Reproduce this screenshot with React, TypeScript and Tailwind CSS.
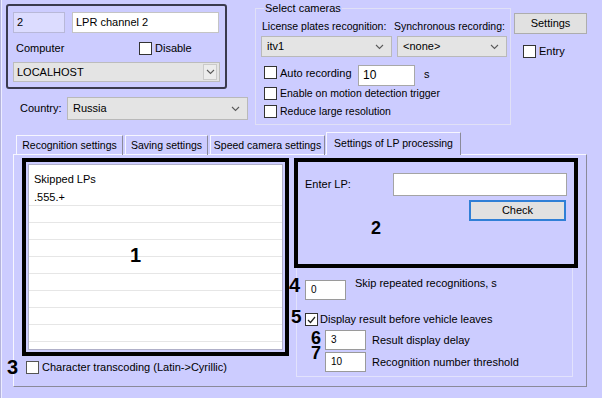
import React from "react"

const Chevron = () => (
  <svg width="9" height="6" viewBox="0 0 9 6" className="shrink-0">
    <path d="M1 1l3.5 3.5L8 1" fill="none" stroke="#5a5a5a" strokeWidth="1.1" />
  </svg>
)

const CheckBox = ({
  checked = false,
  className = "",
}: {
  checked?: boolean
  className?: string
}) => (
  <span
    className={`flex h-[13px] w-[13px] shrink-0 items-center justify-center border border-[#333333] bg-white ${className}`}
  >
    {checked && (
      <svg width="9" height="8" viewBox="0 0 9 8">
        <path d="M1 4l2.5 2.5L8 1" fill="none" stroke="#222" strokeWidth="1.2" />
      </svg>
    )}
  </span>
)

const Combo = ({ value, className = "" }: { value: string; className?: string }) => (
  <div
    className={`flex items-center justify-between border border-[#b9b9b9] bg-[#e4e4e4] pl-[5px] pr-[7px] ${className}`}
  >
    <span>{value}</span>
    <Chevron />
  </div>
)

// annotation digit over the dialog
const Num = ({ n, className }: { n: string; className: string }) => (
  <span className={`absolute font-bold leading-[14px] ${className}`}>{n}</span>
)

const Tab = ({ label, className = "" }: { label: string; className?: string }) => (
  <div
    className={`flex h-[20px] items-center justify-center whitespace-nowrap border-l border-t border-r border-l-[#f6f6ff] border-t-[#f6f6ff] border-r-[#8a8a9a] text-[10.5px] ${className}`}
  >
    {label}
  </div>
)

export default function App() {
  return (
    <div className="relative h-[398px] w-[602px] overflow-hidden bg-[#ccccff] text-[11px] leading-[13px] text-black shadow-[inset_1px_0_0_#b4b4dc,inset_2px_0_0_#ececff] [font-family:'Liberation_Sans',Arial,sans-serif]">
      {/* top area */}
      <div className="flex pl-[6px] pt-[2px]">
        <div className="w-[242px] pt-[2px]">
          <div className="h-[85px] w-[221px] rounded-[3px] border-2 border-[#3a3a4e] pl-[5px] pt-[6px]">
            <div className="flex gap-[7px]">
              <div className="h-[21px] w-[52px] border border-[#b8b8d8] bg-[#dcdcff] pl-[3px] leading-[19px]">
                2
              </div>
              <div className="h-[21px] w-[147px] border border-[#c4c4c4] bg-white pl-[3px] leading-[19px]">
                LPR channel 2
              </div>
            </div>
            <div className="mt-[9px] flex h-[13px] items-center">
              <span className="ml-[3px] w-[123px]">Computer</span>
              <CheckBox />
              <span className="ml-[3px]">Disable</span>
            </div>
            <div className="mt-[7px] flex h-[20px] w-[207px] items-center justify-between border border-[#bcbcbc] bg-[#e4e4e4] pl-[3px] pr-[2px]">
              <span>LOCALHOST</span>
              <span className="flex h-[16px] w-[14px] items-center justify-center border border-[#cacaca] bg-[#ececec]">
                <Chevron />
              </span>
            </div>
          </div>
          <div className="mt-[8px] flex items-center">
            <span className="ml-[14px] w-[47px]">Country:</span>
            <Combo value="Russia" className="h-[23px] w-[181px]" />
          </div>
        </div>

        <fieldset className="ml-[7px] h-[123px] w-[256px] border border-[#e0e0f6] pl-[5px] pt-[5px]">
          <legend className="ml-[3px] px-[1px] leading-[13px]">Select cameras</legend>
          <div className="flex h-[13px] whitespace-nowrap text-[10.5px]">
            <span className="ml-[1px] w-[132px]">License plates recognition:</span>
            <span>Synchronous recording:</span>
          </div>
          <div className="mt-[3px] flex gap-[5px]">
            <Combo value="itv1" className="h-[21px] w-[131px]" />
            <Combo value="<none>" className="h-[21px] w-[110px]" />
          </div>
          <div className="mt-[8px] flex h-[21px] items-start">
            <CheckBox className="ml-[3px] mt-[1px]" />
            <span className="ml-[3px] mt-[2px] w-[78px]">Auto recording</span>
            <div className="h-[21px] w-[57px] border border-[#a8a8a8] bg-white pl-[4px] text-[12px] leading-[19px]">
              10
            </div>
            <span className="ml-[9px] mt-[3px]">s</span>
          </div>
          <div className="mt-[1px] flex h-[13px] items-center">
            <CheckBox className="ml-[3px]" />
            <span className="ml-[3px] text-[10.5px]">Enable on motion detection trigger</span>
          </div>
          <div className="mt-[5px] flex h-[13px] items-center">
            <CheckBox className="ml-[3px]" />
            <span className="ml-[3px] text-[10.5px]">Reduce large resolution</span>
          </div>
        </fieldset>

        <div className="ml-[3px]">
          <div className="mt-[11px] flex h-[21px] w-[73px] items-center justify-center border border-[#adadad] bg-[#e1e1e1]">
            Settings
          </div>
          <div className="ml-[9px] mt-[11px] flex h-[13px] items-center">
            <CheckBox />
            <span className="ml-[3px]">Entry</span>
          </div>
        </div>
      </div>

      {/* tabs */}
      <div className="mt-[7px] flex h-[23px] items-end pl-[16px]">
        <Tab label="Recognition settings" className="w-[107px]" />
        <Tab label="Saving settings" className="ml-[2px] w-[83px]" />
        <Tab label="Speed camera settings" className="ml-[2px] w-[115px]" />
        <div className="relative z-10 ml-[1px] flex h-[23px] w-[135px] items-center justify-center whitespace-nowrap border-l border-t border-r border-l-[#f6f6ff] border-t-[#f6f6ff] border-r-[#8a8a9a] bg-[#ccccff] pb-[2px] text-[10.5px]">
          Settings of LP processing
        </div>
      </div>

      <div className="ml-[13px] mt-[-1px] flex h-[233px] w-[574px] border border-b-[#8a8a9a] border-l-[#f6f6ff] border-r-[#8a8a9a] border-t-[#f6f6ff] pl-[8px] pt-[3px]">
        {/* left column */}
        <div>
          <div className="h-[198px] w-[267px] border-4 border-black p-[2px]">
            <div className="h-full border border-[#b0b0c8] bg-white">
              <div className="h-[24px] pl-[5px] pt-[8px]">Skipped LPs</div>
              <div className="h-[17px] border-b border-[#e6e6e6] pl-[5px] leading-[17px]">.555.+</div>
              {Array.from({ length: 8 }).map((_, i) => (
                <div key={i} className="h-[17px] border-b border-[#e6e6e6]" />
              ))}
            </div>
          </div>
          <div className="ml-[4px] mt-[5px] flex h-[13px] items-center">
            <CheckBox className="border-[#555555] bg-[#f8f8f8]" />
            <span className="ml-[3px]">Character transcoding (Latin-&gt;Cyrillic)</span>
          </div>
        </div>

        {/* right column */}
        <div className="ml-[5px]">
          <div className="flex h-[110px] w-[284px] flex-col border-4 border-black pt-[11px]">
            <div className="flex items-center">
              <span className="ml-[7px]">Enter LP:</span>
              <div className="ml-auto mr-[7px] h-[23px] w-[174px] border border-[#a4a4a4] bg-white" />
            </div>
            <div className="mr-[8px] mt-[4px] flex h-[21px] w-[97px] items-center justify-center self-end border-2 border-[#2f7fd6] bg-[#e1e1e1]">
              Check
            </div>
          </div>
          <div className="ml-[2px] h-[109px] w-[277px] border-b border-l border-r border-[#e2e2fc] pt-[9px]">
            <div className="flex items-start">
              <div className="ml-[8px] mt-[3px] h-[20px] w-[41px] border border-[#9a9a9a] bg-white pl-[5px] text-[10px] leading-[18px]">
                0
              </div>
              <span className="ml-[9px]">Skip repeated recognitions, s</span>
            </div>
            <div className="mt-[13px] flex h-[13px] items-center">
              <CheckBox checked className="ml-[8px]" />
              <span className="ml-[2px]">Display result before vehicle leaves</span>
            </div>
            <div className="mt-[4px] flex h-[20px] items-center">
              <div className="ml-[28px] h-[20px] w-[41px] border border-[#9a9a9a] bg-white pl-[5px] text-[10px] leading-[18px]">
                3
              </div>
              <span className="ml-[6px]">Result display delay</span>
            </div>
            <div className="mt-[2px] flex h-[20px] items-center">
              <div className="ml-[28px] h-[20px] w-[41px] border border-[#9a9a9a] bg-white pl-[5px] text-[10px] leading-[18px]">
                10
              </div>
              <span className="ml-[6px]">Recognition number threshold</span>
            </div>
          </div>
        </div>
      </div>

      {/* annotation numbers */}
      <Num n="1" className="left-[130px] top-[248px] text-[20px]" />
      <Num n="2" className="left-[371px] top-[221px] text-[18px]" />
      <Num n="3" className="left-[7px] top-[360px] text-[20px]" />
      <Num n="4" className="left-[289px] top-[278px] text-[20px]" />
      <Num n="5" className="left-[291px] top-[310px] text-[19px]" />
      <Num n="6" className="left-[311px] top-[331px] text-[18px]" />
      <Num n="7" className="left-[311px] top-[346px] text-[18px]" />
    </div>
  )
}
